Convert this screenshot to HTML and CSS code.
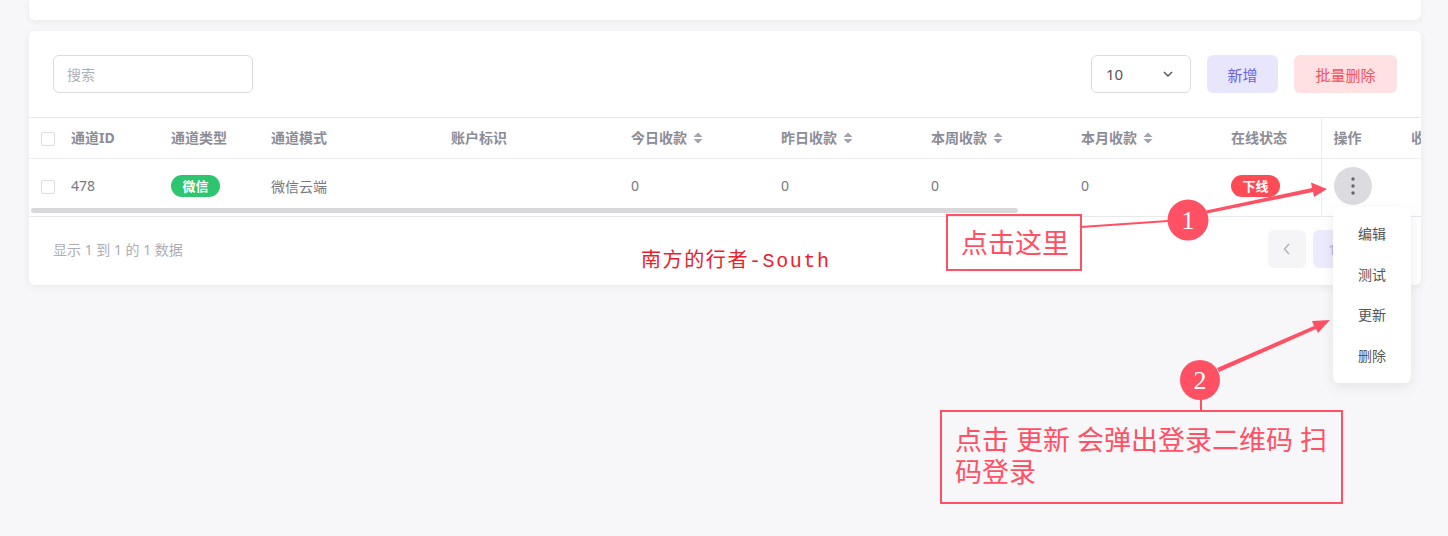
FILE: index.html
```html
<!DOCTYPE html>
<html lang="zh-CN">
<head>
  <meta charset="UTF-8">
  <meta name="viewport" content="width=device-width, initial-scale=1.0">
  <title>通道管理</title>
  <link rel="stylesheet" href="styles.css">
</head>
<body>

  <div class="top-card"></div>

  <div class="card">
    <div class="toolbar">
      <input class="search" type="text" placeholder="搜索">
      <div class="spacer"></div>
      <div class="select">
        <span>10</span>
        <svg width="12" height="8" viewBox="0 0 12 8"><path d="M2 2l4 4 4-4" fill="none" stroke="#555" stroke-width="1.4"/></svg>
      </div>
      <button class="btn btn-add">新增</button>
      <button class="btn btn-del">批量删除</button>
    </div>

    <div class="table-wrap">
      <table class="grid">
        <colgroup>
          <col style="width:30px">
          <col style="width:100px">
          <col style="width:100px">
          <col style="width:180px">
          <col style="width:180px">
          <col style="width:150px">
          <col style="width:150px">
          <col style="width:150px">
          <col style="width:150px">
          <col style="width:102px">
          <col style="width:78px">
          <col style="width:120px">
        </colgroup>
        <thead>
          <tr>
            <th><span class="check"></span></th>
            <th>通道ID</th>
            <th>通道类型</th>
            <th>通道模式</th>
            <th>账户标识</th>
            <th>今日收款 <svg class="sort" width="10" height="12" viewBox="0 0 10 12"><path d="M5 0.5L9.5 5H0.5zM5 11.5L9.5 7H0.5z" fill="#a4a4ae"/></svg></th>
            <th>昨日收款 <svg class="sort" width="10" height="12" viewBox="0 0 10 12"><path d="M5 0.5L9.5 5H0.5zM5 11.5L9.5 7H0.5z" fill="#a4a4ae"/></svg></th>
            <th>本周收款 <svg class="sort" width="10" height="12" viewBox="0 0 10 12"><path d="M5 0.5L9.5 5H0.5zM5 11.5L9.5 7H0.5z" fill="#a4a4ae"/></svg></th>
            <th>本月收款 <svg class="sort" width="10" height="12" viewBox="0 0 10 12"><path d="M5 0.5L9.5 5H0.5zM5 11.5L9.5 7H0.5z" fill="#a4a4ae"/></svg></th>
            <th>在线状态</th>
            <th class="fixed">操作</th>
            <th>收款</th>
          </tr>
        </thead>
        <tbody>
          <tr>
            <td><span class="check"></span></td>
            <td>478</td>
            <td><span class="tag tag-green">微信</span></td>
            <td>微信云端</td>
            <td></td>
            <td>0</td>
            <td>0</td>
            <td>0</td>
            <td>0</td>
            <td><span class="tag tag-red">下线</span></td>
            <td class="fixed">
              <span class="more">
                <svg width="4" height="18" viewBox="0 0 4 18"><circle cx="2" cy="2" r="1.7" fill="#666"/><circle cx="2" cy="9" r="1.7" fill="#666"/><circle cx="2" cy="16" r="1.7" fill="#666"/></svg>
              </span>
            </td>
            <td></td>
          </tr>
        </tbody>
      </table>
      <div class="scroll-track"><div class="scroll-thumb"></div><div class="scroll-fixed"></div></div>
    </div>

    <div class="footer">
      <span class="info">显示 1 到 1 的 1 数据</span>
      <div class="pager">
        <span class="page-btn prev">
          <svg width="8" height="12" viewBox="0 0 8 12"><path d="M6 1L1.5 6 6 11" fill="none" stroke="#aaa" stroke-width="1.2"/></svg>
        </span>
        <span class="page-btn current">1</span>
        <span class="page-btn prev">
          <svg width="8" height="12" viewBox="0 0 8 12"><path d="M2 1L6.5 6 2 11" fill="none" stroke="#aaa" stroke-width="1.2"/></svg>
        </span>
      </div>
    </div>
  </div>

  <!-- dropdown opened from the row menu -->
  <ul class="menu">
    <li>编辑</li>
    <li>测试</li>
    <li>更新</li>
    <li>删除</li>
  </ul>

  <div class="watermark">南方的行者-South</div>

  <!-- screenshot annotations -->
  <svg class="marks" width="1448" height="536" viewBox="0 0 1448 536">
    <line x1="1081" y1="227" x2="1168" y2="221" stroke="#ff5064" stroke-width="2"/>
    <polygon points="1206,210.5 1312,188 1311,182.5 1327,189 1314,197 1313,192 1207,213.5" fill="#ff5064"/>
    <circle cx="1188" cy="220" r="20.5" fill="#ff5064"/>
    <text x="1188" y="229" text-anchor="middle" class="num">1</text>

    <polygon points="1217,368 1314,326 1312,321 1330,320 1318,333 1316,329 1219,372" fill="#ff5064"/>
    <line x1="1201" y1="398" x2="1201" y2="411" stroke="#ff5064" stroke-width="2"/>
    <circle cx="1200" cy="380" r="20" fill="#ff5064"/>
    <text x="1200" y="389" text-anchor="middle" class="num">2</text>
  </svg>

  <div class="note note-one">点击这里</div>
  <div class="note note-two">点击 更新 会弹出登录二维码 扫码登录</div>

</body>
</html>
```

FILE: styles.css
```css
body {
  margin: 0;
  padding: 0 27px 0 29px;
  background-color: #f7f7f9;
  font-family: "Noto Sans", "Noto Sans CJK SC", sans-serif;
  font-size: 14px;
  color: #6f6f7a;
  position: relative;
  height: 536px;
  overflow: hidden;
}

.top-card {
  height: 20px;
  background-color: #fff;
  border-radius: 0 0 6px 6px;
  box-shadow: 0 2px 6px rgba(0, 0, 0, 0.06);
  margin-bottom: 11px;
}

.card {
  background-color: #fff;
  border-radius: 6px;
  box-shadow: 0 2px 8px rgba(0, 0, 0, 0.06);
  overflow: hidden;
}

.toolbar {
  display: flex;
  align-items: center;
  padding: 24px 24px;
  gap: 16px;
  border-bottom: 1px solid #e8e8ec;
}

.search {
  width: 200px;
  height: 38px;
  box-sizing: border-box;
  border: 1px solid #dcdce0;
  border-radius: 6px;
  padding: 0 13px;
  font-family: inherit;
  font-size: 14px;
  outline: none;
}

.search::placeholder {
  color: #b0b0b8;
}

.spacer {
  flex: 1;
}

.select {
  width: 100px;
  height: 38px;
  box-sizing: border-box;
  border: 1px solid #dcdce0;
  border-radius: 6px;
  display: flex;
  align-items: center;
  justify-content: space-between;
  padding: 0 16px 0 14px;
  font-size: 15px;
  color: #555;
}

.btn {
  height: 38px;
  border: none;
  border-radius: 6px;
  padding: 0;
  font-family: inherit;
  font-size: 15px;
  cursor: pointer;
}

.btn-add {
  width: 71px;
  background-color: #e8e6fd;
  color: #6c62ea;
}

.btn-del {
  width: 103px;
  background-color: #ffe0e3;
  color: #f5515d;
}

.table-wrap {
  overflow: hidden;
}

.grid {
  table-layout: fixed;
  border-collapse: collapse;
  width: 1490px;
}

.grid th,
.grid td {
  text-align: left;
  padding: 0 12px;
  white-space: nowrap;
  overflow: hidden;
}

.grid th {
  height: 38px;
  padding-bottom: 2px;
  font-weight: bold;
  color: #8c8c96;
  border-bottom: 1px solid #ececf0;
}

.grid td {
  height: 41px;
  padding-top: 6px;
  color: #777780;
}

.grid .fixed {
  border-left: 1px solid #ececf0;
  box-shadow: -3px 0 5px rgba(0, 0, 0, 0.03);
}

.check {
  display: inline-block;
  width: 12px;
  height: 12px;
  border: 1px solid #dcdce0;
  border-radius: 2px;
  vertical-align: middle;
}

.sort {
  margin-left: 2px;
  vertical-align: -1px;
}

.tag {
  display: inline-block;
  width: 49px;
  height: 22px;
  line-height: 22px;
  border-radius: 11px;
  text-align: center;
  font-size: 13px;
  font-weight: bold;
  color: #fff;
}

.tag-green {
  background-color: #2dc56d;
}

.tag-red {
  background-color: #ff4b55;
}

.more {
  display: flex;
  width: 38px;
  height: 38px;
  border-radius: 50%;
  background-color: #dcdce0;
  align-items: center;
  justify-content: center;
}

.scroll-track {
  display: flex;
  height: 10px;
  border-bottom: 1px solid #e8e8ec;
}

.scroll-thumb {
  width: 987px;
  height: 5px;
  margin: 2px 0 0 2px;
  border-radius: 3px;
  background-color: #d9d9dc;
}

.scroll-fixed {
  margin-left: 303px;
  border-left: 1px solid #ececf0;
}

.footer {
  display: flex;
  align-items: center;
  justify-content: space-between;
  height: 64px;
  padding: 0 25px 4px 24px;
}

.info {
  color: #adadb5;
}

.pager {
  display: flex;
  gap: 7px;
}

.page-btn {
  display: flex;
  width: 38px;
  height: 38px;
  border-radius: 6px;
  align-items: center;
  justify-content: center;
}

.prev {
  background-color: #f5f5f7;
}

.current {
  background-color: #ecebfd;
  color: #b6b0f5;
  font-size: 15px;
}

.menu {
  position: absolute;
  left: 1333px;
  top: 207px;
  width: 78px;
  margin: 0;
  padding: 7px 0;
  list-style: none;
  background-color: #fff;
  border-radius: 6px;
  box-shadow: 0 4px 14px rgba(0, 0, 0, 0.08);
}

.menu li {
  height: 40.5px;
  line-height: 40.5px;
  text-align: center;
  color: #555;
  font-size: 14px;
}

.watermark {
  position: absolute;
  left: 641px;
  top: 244px;
  font-family: "Liberation Mono", "Noto Sans CJK SC", monospace;
  font-size: 20px;
  letter-spacing: 1.6px;
  color: #e8212c;
}

.marks {
  position: absolute;
  left: 0;
  top: 0;
  pointer-events: none;
}

.marks .num {
  font-family: "Liberation Serif", serif;
  font-size: 26px;
  fill: #fff;
}

.note {
  position: absolute;
  box-sizing: border-box;
  border: 2px solid #ff5064;
  color: #ff5064;
  font-size: 27px;
}

.note-one {
  left: 946px;
  top: 214px;
  width: 136px;
  height: 57px;
  line-height: 53px;
  padding-left: 13px;
}

.note-two {
  left: 940px;
  top: 410px;
  width: 403px;
  height: 94px;
  padding: 12px 13px 0;
  line-height: 32px;
}
```
